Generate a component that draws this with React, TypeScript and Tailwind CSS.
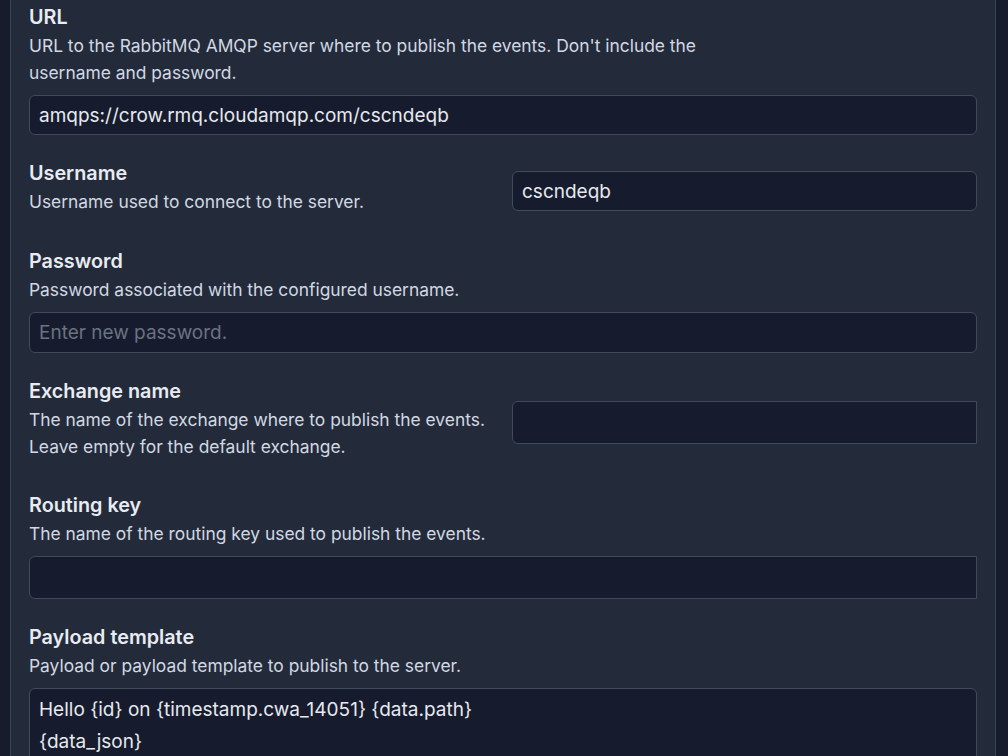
import React from 'react';

const FONT = { fontFamily: 'Inter, "Noto Sans", "Liberation Sans", sans-serif' };

const inputBase =
  'block w-full bg-[#161c2d] border border-[#404a5b] text-[19px] text-[#e6e9ef] placeholder:text-[#6b7281] px-[9px] outline-none';

function Label({ children }: { children: React.ReactNode }) {
  return <div className="text-[19.8px] leading-7 font-semibold text-[#e8ebf1]">{children}</div>;
}

function Desc({ children, className = '' }: { children: React.ReactNode; className?: string }) {
  return <p className={`mt-[1px] text-[17.4px] leading-[27px] text-[#d2d8e2] ${className}`}>{children}</p>;
}

export default function App() {
  return (
    <div className="h-screen overflow-hidden bg-[#161c2c] pl-[10px] pr-[12px]" style={FONT}>
      <div className="h-full border-x border-[#3a4455] bg-[#232b3b] pl-[18px] pr-[18px] pt-[3px]">
        <div className="space-y-6">
          {/* URL */}
          <div>
            <Label>URL</Label>
            <Desc className="max-w-[680px]">
              URL to the RabbitMQ AMQP server where to publish the events. Don't include the username and password.
            </Desc>
            <input
              className={`${inputBase} mt-[9px] h-10 rounded-md`}
              defaultValue="amqps://crow.rmq.cloudamqp.com/cscndeqb"
            />
          </div>

          {/* Username */}
          <div className="grid grid-cols-[1fr_465px] items-center gap-[18px]">
            <div className="pb-2">
              <Label>Username</Label>
              <Desc>Username used to connect to the server.</Desc>
            </div>
            <input className={`${inputBase} h-10 rounded-md`} defaultValue="cscndeqb" />
          </div>

          {/* Password */}
          <div>
            <Label>Password</Label>
            <Desc>Password associated with the configured username.</Desc>
            <input
              type="password"
              className={`${inputBase} mt-[9px] h-[41px] rounded-md`}
              placeholder="Enter new password."
            />
          </div>

          {/* Exchange name */}
          <div className="grid grid-cols-[1fr_465px] items-center gap-[18px]">
            <div className="pb-[7px]">
              <Label>Exchange name</Label>
              <Desc>
                The name of the exchange where to publish the events.
                <br />
                Leave empty for the default exchange.
              </Desc>
            </div>
            <input className={`${inputBase} h-[43px] rounded-l-md`} />
          </div>

          {/* Routing key */}
          <div>
            <Label>Routing key</Label>
            <Desc>The name of the routing key used to publish the events.</Desc>
            <input className={`${inputBase} mt-[9px] h-[43px] rounded-l-md`} />
          </div>

          {/* Payload template */}
          <div>
            <Label>Payload template</Label>
            <Desc>Payload or payload template to publish to the server.</Desc>
            <textarea
              rows={4}
              className={`${inputBase} mt-[9px] resize-none rounded-md pt-[5px] pb-1 leading-8`}
              defaultValue={'Hello {id} on {timestamp.cwa_14051} {data.path}\n{data_json}'}
            />
          </div>
        </div>
      </div>
    </div>
  );
}
